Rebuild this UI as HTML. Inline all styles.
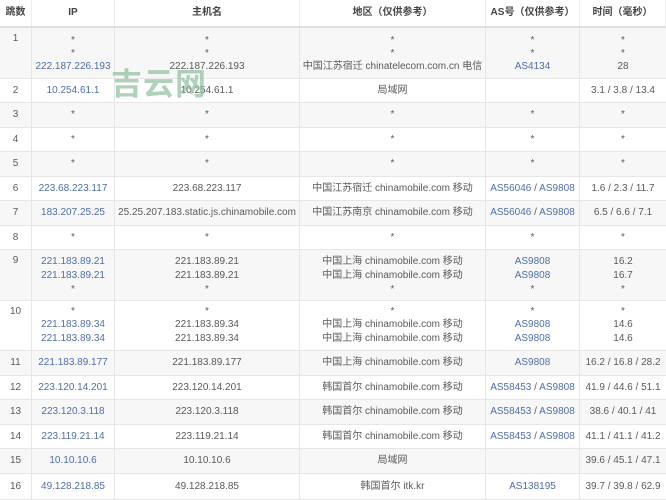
<!DOCTYPE html>
<html><head><meta charset="utf-8"><style>
*{margin:0;padding:0;box-sizing:border-box}
body{width:666px;height:500px;background:#fff;font-family:"Liberation Sans","Noto Sans CJK SC",sans-serif;font-size:10px;color:#5a5a5a;position:relative;overflow:hidden}
.r{position:absolute;left:0;width:666px;border-bottom:1px solid #e6e6e6}
.g{background:#f7f7f7}
.c{position:absolute;top:0;bottom:0;text-align:center;border-right:1px solid #e6e6e6;white-space:nowrap;line-height:12px}
.c0{left:0;width:32px}.c1{left:32px;width:83px}.c2{left:115px;width:185px}.c3{left:300px;width:186px}.c4{left:486px;width:94px}.c5{left:580px;width:86px;border-right:none}
.s .c{display:flex;align-items:center;justify-content:center}
.s .c>*{line-height:12px}
.m .c{padding-top:var(--p)}
.m .c div{height:14px;line-height:14px}
.m .c div.st{height:13px;line-height:13px}
.m .c0{padding-top:5px}
a,.a{color:#4f6fa8;text-decoration:none}
.h{font-weight:bold;color:#444;border-bottom:2px solid #e0e0e0}
.h .c{border-right:1px solid #eee}
.wm{position:absolute;left:111px;top:59px;font-size:31px;font-weight:bold;color:#8fbf9c;opacity:.7;letter-spacing:1px;font-family:"Noto Sans CJK SC",sans-serif}
</style></head><body>
<div class="r s h" style="top:0;height:28px"><div class="c c0">跳数</div><div class="c c1">IP</div><div class="c c2">主机名</div><div class="c c3">地区（仅供参考）</div><div class="c c4">AS号（仅供参考）</div><div class="c c5">时间（毫秒）</div></div>

<div class="r m g" style="top:28px;height:51px;--p:6px"><div class="c c0">1</div>
<div class="c c1"><div class="st">*</div><div class="st">*</div><div class="a">222.187.226.193</div></div>
<div class="c c2"><div class="st">*</div><div class="st">*</div><div>222.187.226.193</div></div>
<div class="c c3"><div class="st">*</div><div class="st">*</div><div>中国江苏宿迁 chinatelecom.com.cn 电信</div></div>
<div class="c c4"><div class="st">*</div><div class="st">*</div><div class="a">AS4134</div></div>
<div class="c c5"><div class="st">*</div><div class="st">*</div><div>28</div></div></div>

<div class="r s" style="top:79px;height:24px"><div class="c c0">2</div><div class="c c1 a">10.254.61.1</div><div class="c c2">10.254.61.1</div><div class="c c3">局域网</div><div class="c c4"></div><div class="c c5">3.1 / 3.8 / 13.4</div></div>
<div class="r s g" style="top:103px;height:25px"><div class="c c0">3</div><div class="c c1">*</div><div class="c c2">*</div><div class="c c3">*</div><div class="c c4">*</div><div class="c c5">*</div></div>
<div class="r s" style="top:128px;height:24px"><div class="c c0">4</div><div class="c c1">*</div><div class="c c2">*</div><div class="c c3">*</div><div class="c c4">*</div><div class="c c5">*</div></div>
<div class="r s g" style="top:152px;height:25px"><div class="c c0">5</div><div class="c c1">*</div><div class="c c2">*</div><div class="c c3">*</div><div class="c c4">*</div><div class="c c5">*</div></div>
<div class="r s" style="top:177px;height:24px"><div class="c c0">6</div><div class="c c1 a">223.68.223.117</div><div class="c c2">223.68.223.117</div><div class="c c3">中国江苏宿迁 chinamobile.com 移动</div><div class="c c4"><span><a>AS56046</a> / <a>AS9808</a></span></div><div class="c c5">1.6 / 2.3 / 11.7</div></div>
<div class="r s g" style="top:201px;height:25px"><div class="c c0">7</div><div class="c c1 a">183.207.25.25</div><div class="c c2">25.25.207.183.static.js.chinamobile.com</div><div class="c c3">中国江苏南京 chinamobile.com 移动</div><div class="c c4"><span><a>AS56046</a> / <a>AS9808</a></span></div><div class="c c5">6.5 / 6.6 / 7.1</div></div>
<div class="r s" style="top:226px;height:24px"><div class="c c0">8</div><div class="c c1">*</div><div class="c c2">*</div><div class="c c3">*</div><div class="c c4">*</div><div class="c c5">*</div></div>

<div class="r m g" style="top:250px;height:51px;--p:5px"><div class="c c0">9</div>
<div class="c c1"><div class="a">221.183.89.21</div><div class="a">221.183.89.21</div><div class="st">*</div></div>
<div class="c c2"><div>221.183.89.21</div><div>221.183.89.21</div><div class="st">*</div></div>
<div class="c c3"><div>中国上海 chinamobile.com 移动</div><div>中国上海 chinamobile.com 移动</div><div class="st">*</div></div>
<div class="c c4"><div class="a">AS9808</div><div class="a">AS9808</div><div class="st">*</div></div>
<div class="c c5"><div>16.2</div><div>16.7</div><div class="st">*</div></div></div>

<div class="r m" style="top:301px;height:50px;--p:4px"><div class="c c0">10</div>
<div class="c c1"><div class="st">*</div><div class="a">221.183.89.34</div><div class="a">221.183.89.34</div></div>
<div class="c c2"><div class="st">*</div><div>221.183.89.34</div><div>221.183.89.34</div></div>
<div class="c c3"><div class="st">*</div><div>中国上海 chinamobile.com 移动</div><div>中国上海 chinamobile.com 移动</div></div>
<div class="c c4"><div class="st">*</div><div class="a">AS9808</div><div class="a">AS9808</div></div>
<div class="c c5"><div class="st">*</div><div>14.6</div><div>14.6</div></div></div>

<div class="r s g" style="top:351px;height:25px"><div class="c c0">11</div><div class="c c1 a">221.183.89.177</div><div class="c c2">221.183.89.177</div><div class="c c3">中国上海 chinamobile.com 移动</div><div class="c c4 a">AS9808</div><div class="c c5">16.2 / 16.8 / 28.2</div></div>
<div class="r s" style="top:376px;height:24px"><div class="c c0">12</div><div class="c c1 a">223.120.14.201</div><div class="c c2">223.120.14.201</div><div class="c c3">韩国首尔 chinamobile.com 移动</div><div class="c c4"><span><a>AS58453</a> / <a>AS9808</a></span></div><div class="c c5">41.9 / 44.6 / 51.1</div></div>
<div class="r s g" style="top:400px;height:25px"><div class="c c0">13</div><div class="c c1 a">223.120.3.118</div><div class="c c2">223.120.3.118</div><div class="c c3">韩国首尔 chinamobile.com 移动</div><div class="c c4"><span><a>AS58453</a> / <a>AS9808</a></span></div><div class="c c5">38.6 / 40.1 / 41</div></div>
<div class="r s" style="top:425px;height:24px"><div class="c c0">14</div><div class="c c1 a">223.119.21.14</div><div class="c c2">223.119.21.14</div><div class="c c3">韩国首尔 chinamobile.com 移动</div><div class="c c4"><span><a>AS58453</a> / <a>AS9808</a></span></div><div class="c c5">41.1 / 41.1 / 41.2</div></div>
<div class="r s g" style="top:449px;height:25px"><div class="c c0">15</div><div class="c c1 a">10.10.10.6</div><div class="c c2">10.10.10.6</div><div class="c c3">局域网</div><div class="c c4"></div><div class="c c5">39.6 / 45.1 / 47.1</div></div>
<div class="r s" style="top:474px;height:26px"><div class="c c0">16</div><div class="c c1 a">49.128.218.85</div><div class="c c2">49.128.218.85</div><div class="c c3">韩国首尔 itk.kr</div><div class="c c4 a">AS138195</div><div class="c c5">39.7 / 39.8 / 62.9</div></div>

<div class="wm">吉云网</div>
</body></html>
